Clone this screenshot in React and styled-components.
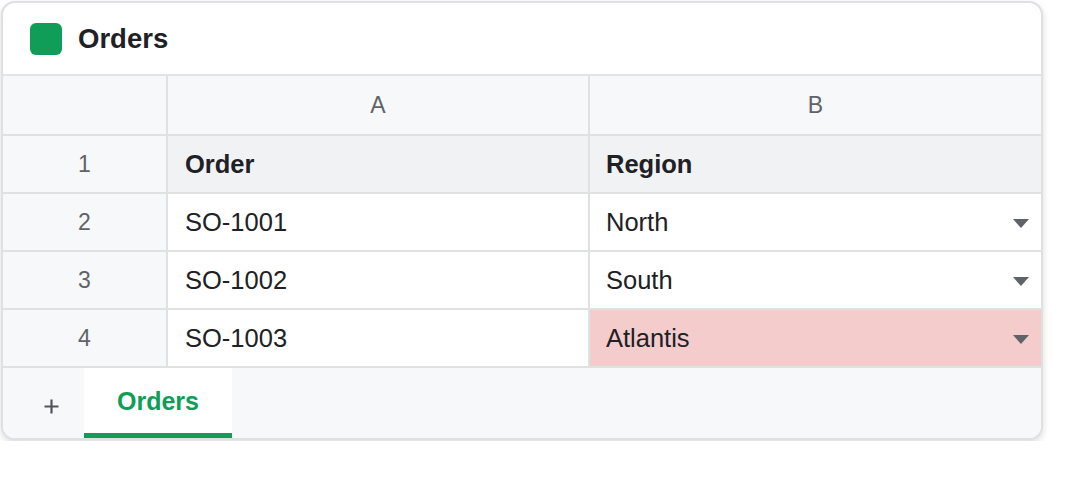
import React from "react";
import styled, { createGlobalStyle } from "styled-components";

const GlobalStyle = createGlobalStyle`
  body {
    margin: 0;
    background: #ffffff;
    font-family: "Liberation Sans", Arial, sans-serif;
    color: #202124;
  }
`;

const Page = styled.div`
  padding: 1px;
`;

const Card = styled.div`
  box-sizing: border-box;
  width: 1042px;
  border: 2px solid #dfe0e3;
  border-radius: 14px;
  background: #ffffff;
  box-shadow: 0 3px 7px rgba(0, 0, 0, 0.14);
  overflow: hidden;
`;

const Header = styled.div`
  height: 71px;
  display: flex;
  align-items: center;
  gap: 16px;
  padding-left: 27px;
  border-bottom: 2px solid #e2e3e3;
`;

const Badge = styled.div`
  width: 32px;
  height: 32px;
  border-radius: 6px;
  background: #0f9d58;
`;

const Title = styled.div`
  font-size: 27.5px;
  font-weight: 700;
  color: #202124;
`;

const Grid = styled.div`
  display: grid;
  grid-template-columns: 163px 420px 1fr;
  grid-template-rows: 58px repeat(4, 56px);
  gap: 2px;
  background: #e0e1e1;
  border-bottom: 2px solid #e0e1e1;
`;

const ColHead = styled.div`
  background: #f7f8fa;
  display: flex;
  align-items: center;
  justify-content: center;
  font-size: 23px;
  color: #5f6368;
`;

const Cell = styled.div`
  display: flex;
  align-items: center;
  justify-content: space-between;
  padding: 0 12px 0 ${(p) => (p.$col === "b" ? "16px" : "17px")};
  font-size: 25.5px;
  font-weight: ${(p) => (p.$head ? 700 : 400)};
  background: ${(p) =>
    p.$invalid ? "#f4cccc" : p.$head ? "#f1f2f4" : "#ffffff"};
  color: #202124;
`;

const Caret = styled.span`
  width: 0;
  height: 0;
  border-left: 8px solid transparent;
  border-right: 8px solid transparent;
  border-top: 9px solid #5f6368;
  margin-top: 2px;
`;

const TabBar = styled.div`
  height: 70px;
  display: flex;
  align-items: stretch;
  padding-left: 16px;
  background: #f7f8fa;
`;

const AddButton = styled.div`
  width: 65px;
  display: flex;
  align-items: center;
  justify-content: center;
  padding-top: 6px;
  color: #50555b;
`;

const Tab = styled.div`
  box-sizing: border-box;
  width: 148px;
  display: flex;
  align-items: center;
  justify-content: center;
  background: #ffffff;
  border-bottom: 5px solid #0f9d58;
  color: #0f9d58;
  font-size: 25px;
  font-weight: 700;
  padding-top: 2px;
`;

const rows = [
  { n: 1, a: "Order", b: "Region", head: true },
  { n: 2, a: "SO-1001", b: "North" },
  { n: 3, a: "SO-1002", b: "South" },
  { n: 4, a: "SO-1003", b: "Atlantis", invalid: true },
];

export default function App() {
  return (
    <Page>
      <GlobalStyle />
      <Card>
        <Header>
          <Badge />
          <Title>Orders</Title>
        </Header>
        <Grid>
          <ColHead />
          <ColHead>A</ColHead>
          <ColHead>B</ColHead>
          {rows.map((r) => (
            <React.Fragment key={r.n}>
              <ColHead>{r.n}</ColHead>
              <Cell $head={r.head}>{r.a}</Cell>
              <Cell $col="b" $head={r.head} $invalid={r.invalid}>
                {r.b}
                {!r.head && <Caret />}
              </Cell>
            </React.Fragment>
          ))}
        </Grid>
        <TabBar>
          <AddButton>
            <svg width="15" height="15" viewBox="0 0 15 15">
              <path
                d="M7.5 0.5v14M0.5 7.5h14"
                stroke="currentColor"
                strokeWidth="2.2"
              />
            </svg>
          </AddButton>
          <Tab>Orders</Tab>
        </TabBar>
      </Card>
    </Page>
  );
}
